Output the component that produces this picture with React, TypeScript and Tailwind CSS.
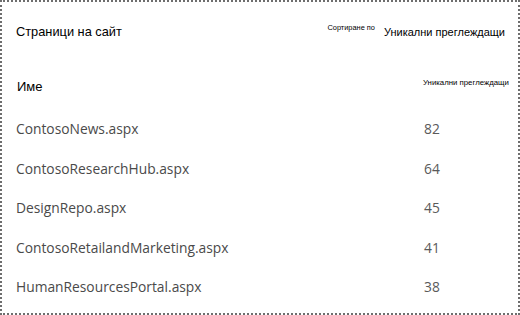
const rows = [
  { name: "ContosoNews.aspx", views: 82 },
  { name: "ContosoResearchHub.aspx", views: 64 },
  { name: "DesignRepo.aspx", views: 45 },
  { name: "ContosoRetailandMarketing.aspx", views: 41 },
  { name: "HumanResourcesPortal.aspx", views: 38 },
];

export default function App() {
  return (
    <div className="w-[520px] h-[315px] bg-white border-2 border-dotted border-[#6e6e6e] font-['Liberation_Sans',Arial,sans-serif]">
      {/* header */}
      <div className="flex items-start justify-between pl-[14px] pr-[13px] pt-[21px] h-[56px]">
        <h2 className="text-[12.8px] leading-[18px] text-black">Страници на сайт</h2>
        <div className="flex items-start gap-[9px]">
          <span className="text-[7.4px] leading-[10px] text-black">Сортиране по</span>
          <span className="text-[11px] leading-[16px] text-black mt-[1px]">Уникални преглеждащи</span>
        </div>
      </div>

      {/* table header */}
      <div className="flex items-start pl-[15px] pt-[20px] h-[52px]">
        <span className="w-[406px] text-[13px] leading-[16px] text-black mt-[1px]">Име</span>
        <span className="text-[7.8px] leading-[10px] text-black">Уникални преглеждащи</span>
      </div>

      {/* rows */}
      <div className="flex flex-col pl-[14px] font-['Open_Sans',sans-serif] text-[13.8px]">
        {rows.map((r) => (
          <div key={r.name} className="flex items-center h-[39.5px]">
            <span className="w-[408px] text-[#4a4a4a]">{r.name}</span>
            <span className="text-[#5a5a5a]">{r.views}</span>
          </div>
        ))}
      </div>
    </div>
  );
}
